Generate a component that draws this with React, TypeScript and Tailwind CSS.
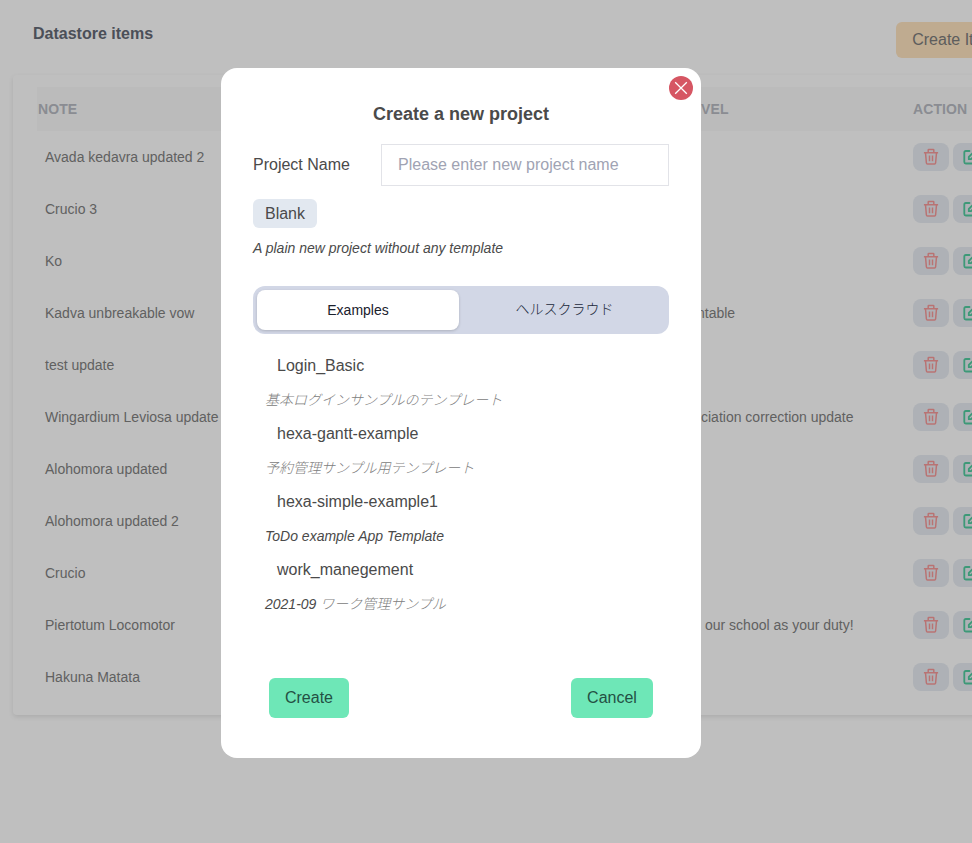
const rows = [
  { note: 'Avada kedavra updated 2', level: '', pad: '' },
  { note: 'Crucio 3', level: '', pad: '' },
  { note: 'Ko', level: '', pad: '' },
  { note: 'Kadva unbreakable vow', level: 'ntable', pad: 'pl-[33px]' },
  { note: 'test update', level: '', pad: '' },
  { note: 'Wingardium Leviosa update', level: 'ciation correction update', pad: 'pl-[37px]' },
  { note: 'Alohomora updated', level: '', pad: '' },
  { note: 'Alohomora updated 2', level: '', pad: '' },
  { note: 'Crucio', level: '', pad: '' },
  { note: 'Piertotum Locomotor', level: 'our school as your duty!', pad: 'pl-[41px]' },
  { note: 'Hakuna Matata', level: '', pad: '' },
];

const templates = [
  { name: 'Login_Basic', latin: '', japanese: '基本ログインサンプルのテンプレート' },
  { name: 'hexa-gantt-example', latin: '', japanese: '予約管理サンプル用テンプレート' },
  { name: 'hexa-simple-example1', latin: 'ToDo example App Template', japanese: '' },
  { name: 'work_manegement', latin: '2021-09 ', japanese: 'ワーク管理サンプル' },
];

function TrashIcon() {
  return (
    <svg width="16" height="18" viewBox="0 0 16 18" fill="none" stroke="#f79a9a" strokeWidth="1.5" strokeLinejoin="round">
      <path d="M.9 4.700h14.200M2.500 4.700l.9 10.300q.1 1 1.100 1h7q1 0 1.100-1l.9-10.300M5.200 4.500V2.100q0-.6.6-.6h4.400q.6 0 .6.6v2.400M6.500 7.500v5.800M9.500 7.500v5.800" />
    </svg>
  );
}

function EditIcon() {
  return (
    <svg width="18" height="18" viewBox="0 0 18 18" fill="none" stroke="#52cda0" strokeWidth="1.8" strokeLinejoin="round" strokeLinecap="round">
      <path d="M7.500 3H3.800Q2.300 3 2.300 4.500v9.500Q2.300 15.500 3.800 15.500h9.500q1.500 0 1.500-1.500V10.500" />
      <path d="M6.800 11.200V9L13.500 2.300l2.200 2.200L9 11.200z" />
    </svg>
  );
}

function TableRow({ row }: { row: (typeof rows)[number] }) {
  return (
    <div className="flex h-[52px] items-center text-sm text-[#828282]">
      <div className="w-[627px] shrink-0 whitespace-nowrap pl-2">{row.note}</div>
      <div className={`w-[249px] shrink-0 whitespace-nowrap ${row.pad}`}>{row.level}</div>
      <div className="flex shrink-0 gap-1">
        <button className="flex h-7 w-9 items-center justify-center rounded-lg bg-[#e8edf3]"><TrashIcon /></button>
        <button className="flex h-7 w-9 items-center justify-center rounded-lg bg-[#e8edf3]"><EditIcon /></button>
      </div>
    </div>
  );
}

function Modal() {
  return (
    <div className="relative flex h-[690px] w-[480px] flex-col rounded-2xl bg-white px-8 text-[#4a4a4a]">
      <button className="absolute right-2 top-2 flex size-6 items-center justify-center rounded-full bg-[#d65663]">
        <svg width="14" height="14" viewBox="0 0 14 14" stroke="white" strokeWidth="1.3">
          <path d="M1.200 1.200l11.600 11.600M12.800 1.200L1.200 12.800" />
        </svg>
      </button>
      <h2 className="mt-8 text-center text-lg font-bold leading-7">Create a new project</h2>
      <div className="mt-4 flex h-[42px] items-center justify-between">
        <label>Project Name</label>
        <input
          className="h-[42px] w-72 border border-[#e2e3e8] px-4 placeholder:text-[#a0a3b3]"
          placeholder="Please enter new project name"
        />
      </div>
      <button className="mt-[13px] h-[29px] w-16 rounded-md bg-[#e2e8f0]">Blank</button>
      <p className="mt-[10px] text-sm italic">A plain new project without any template</p>
      <div className="mt-7 flex h-12 shrink-0 rounded-xl bg-[#d2d7e6] p-1 text-sm">
        <button className="w-[202px] rounded-lg bg-white text-[#1a202c] shadow-[0_1px_3px_rgba(0,0,0,0.18)]">Examples</button>
        <button className="flex-1 pb-0.5 pl-[5px] font-light text-[#20283a]">ヘルスクラウド</button>
      </div>
      <div className="mt-[14px] flex flex-col pl-3">
        {templates.map((t) => (
          <div key={t.name} className="h-[68px]">
            <div className="h-9 pl-3 leading-9">{t.name}</div>
            <p className="h-8 whitespace-nowrap text-sm leading-8 italic">
              {t.latin}
              <span className="font-light text-[#808080]">{t.japanese}</span>
            </p>
          </div>
        ))}
      </div>
      <div className="mt-[58px] flex justify-between px-4">
        <button className="h-10 w-20 rounded-md bg-[#6ee7b7] text-[#245044]">Create</button>
        <button className="h-10 w-[82px] rounded-md bg-[#6ee7b7] text-[#245044]">Cancel</button>
      </div>
    </div>
  );
}

export default function App() {
  return (
    <div className="relative h-[843px] w-full overflow-hidden bg-white font-['Liberation_Sans','Noto_Sans_CJK_JP',sans-serif]">
      <header className="flex h-[75px] w-[1012px] justify-between pl-[33px] pt-[22px]">
        <h1 className="font-bold leading-[23px] text-[#656a76]">Datastore items</h1>
        <button className="h-9 w-[116px] rounded-md bg-[#ffe4c0] text-[#7c7c7c]">Create Item</button>
      </header>
      <main className="ml-[13px] h-[640px] w-[1040px] rounded-sm pl-6 pt-3 shadow-[0_2px_5px_rgba(0,0,0,0.1)]">
        <div className="flex h-11 items-center bg-[#fafafa] text-sm font-bold tracking-[0.1px] text-[#b8bbc3]">
          <div className="w-[646px] pl-px">NOTE</div>
          <div className="w-[230px]">LEVEL</div>
          <div>ACTION</div>
        </div>
        {rows.map((row) => <TableRow key={row.note} row={row} />)}
      </main>
      <div className="absolute inset-0 bg-black/25 pl-[221px] pt-[68px]">
        <Modal />
      </div>
    </div>
  );
}
